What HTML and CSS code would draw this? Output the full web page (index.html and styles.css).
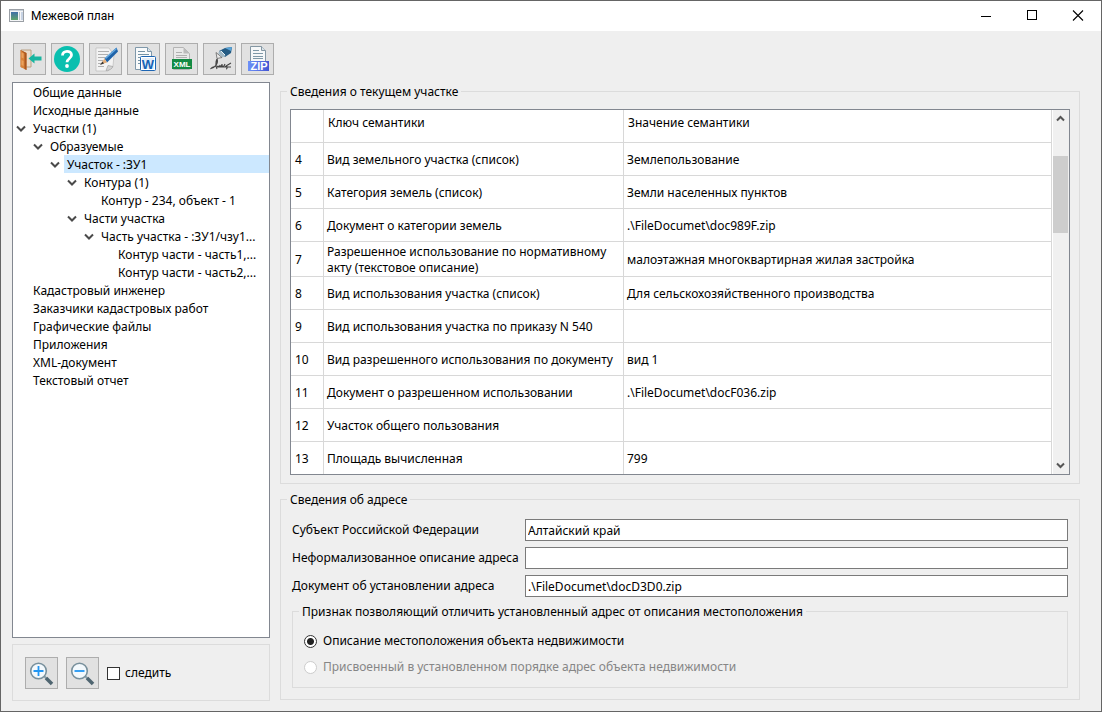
FILE: index.html
```html
<!DOCTYPE html>
<html lang="ru">
<head>
<meta charset="utf-8">
<title>Межевой план</title>
<link rel="stylesheet" href="styles.css">
</head>
<body>
<div class="window">
  <header class="titlebar">
    <svg class="app-icon" width="16" height="16" viewBox="0 0 16 16" aria-hidden="true">
      <defs><linearGradient id="app" x1="0" y1="0" x2="0" y2="1"><stop offset="0" stop-color="#3f6fa8"/><stop offset="1" stop-color="#5fa46c"/></linearGradient></defs>
      <rect x=".5" y=".5" width="14" height="12" fill="#f4f5f7" stroke="#9a9fa5"/>
      <path d="M1 1.500h13" stroke="#c9d2dc"/>
      <rect x="2" y="3" width="7" height="8" fill="url(#app)"/>
      <rect x="10" y="3" width="1" height="8" fill="#b8c4cc"/>
      <rect x="12" y="3" width="2" height="8" fill="#c7d3e4"/>
    </svg>
    <h1 class="title">Межевой план</h1>
    <button class="caption" type="button" aria-label="Свернуть"><svg width="12" height="12" viewBox="0 0 12 12"><path d="M1 6.500h10" stroke="#000"/></svg></button>
    <button class="caption" type="button" aria-label="Развернуть"><svg width="12" height="12" viewBox="0 0 12 12"><rect x="1.500" y=".5" width="9" height="9" fill="none" stroke="#000"/></svg></button>
    <button class="caption" type="button" aria-label="Закрыть"><svg width="12" height="12" viewBox="0 0 12 12"><path d="M1 .5l10 10M11 .5l-10 10" stroke="#000" stroke-width="1.100"/></svg></button>
  </header>

  <div class="client">
    <div class="toolbar" role="toolbar">
      <button class="tool" type="button" aria-label="Выход">
        <svg width="28" height="28" viewBox="0 0 28 28">
          <path d="M6 5h10v17H6z" fill="#e9dccb" stroke="#b9a084"/>
          <path d="M5.500 5l6 3v17l-6-3z" fill="#d98238"/><path d="M5.500 5l6 3v17l-2-1V8.500z" fill="#a9571f"/>
          <path d="M6.500 7.500l2 1v5l-2-1zM6.500 15l2 1v5l-2-1z" fill="#eaa15c"/>
          <path d="M13.500 13.500l6-5v3h7v4h-7v3z" fill="#18b5a0"/>
        </svg>
      </button>
      <button class="tool" type="button" aria-label="Справка">
        <svg width="28" height="28" viewBox="0 0 28 28">
          <circle cx="14" cy="14" r="13" fill="#0abfaf"/>
          <path d="M9.500 10.500c0-5.500 9-5.500 9-.4 0 3.400-4.500 3.400-4.500 7.200" fill="none" stroke="#fff" stroke-width="2.800"/>
          <circle cx="14" cy="21" r="1.900" fill="#fff"/>
        </svg>
      </button>
      <button class="tool" type="button" aria-label="Редактировать">
        <svg width="28" height="28" viewBox="0 0 28 28">
          <path d="M5 3h13l5 7-1 11-5 5H5z" fill="#f3f3f3" stroke="#bbb" stroke-width=".7"/>
          <path d="M7 6.500h11M7 9.500h10M7 12.500h7M7 15.500h5M7 18.500h3M7 21.500h6" stroke="#b0b0b0"/>
          <path d="M15 25.500l2-5 5 1c-1 2-3 4-7 4z" fill="#d4d4d4" stroke="#999" stroke-width=".6"/>
          <path d="M13.500 13.500L25.500 2.500l1.500 4-11 11z" fill="#1f63a9"/>
          <path d="M14.500 13.500L25.500 3.500" stroke="#64a8df" stroke-width="1.500"/>
          <path d="M13.500 13.500l2.500 4-6.500 2z" fill="#e3ae7a"/><path d="M11.500 16.500l1.500 2-4 1.500z" fill="#343434"/>
        </svg>
      </button>
      <button class="tool" type="button" aria-label="Отчет Word">
        <svg width="28" height="28" viewBox="0 0 28 28">
          <path d="M6.500 2.500h12l4 4v18h-16z" fill="#f8fafb" stroke="#7f98aa"/><path d="M18.500 2.500v4h4" fill="#dce5eb" stroke="#7f98aa"/>
          <path d="M9 6.500h7M9 9.500h11M9 12.500h2M9 15.500h2M9 18.500h2" stroke="#7593a6"/>
          <rect x="11.500" y="11.500" width="15" height="14" rx="1" fill="#fff" stroke="#1d65b3"/>
          <rect x="13" y="13" width="12" height="11" fill="#e2edf9"/>
          <text x="19" y="23.500" text-anchor="middle" class="word-mark">W</text>
        </svg>
      </button>
      <button class="tool" type="button" aria-label="Документ XML">
        <svg width="28" height="28" viewBox="0 0 28 28">
          <path d="M6.500 2.500h10l6 6v16h-16z" fill="#e9e9e9" stroke="#b4b4b4"/><path d="M16.500 2.500v6h6z" fill="#bcbcbc"/>
          <path d="M9 7.500h6M9 10.500h11M9 12.500h11" stroke="#b0b0b0"/>
          <rect x="5" y="14" width="20" height="10" fill="#138a43"/>
          <text x="15" y="22" text-anchor="middle" class="xml-mark">XML</text>
        </svg>
      </button>
      <button class="tool" type="button" aria-label="Подпись">
        <svg width="28" height="28" viewBox="0 0 28 28">
          <path d="M14 6l6-3 7-1-1 6-6 4z" fill="#245b83"/><path d="M20 3l7-1-1 4z" fill="#59a4d8"/>
          <path d="M13 8l3-2.500 4.500 5-3 2z" fill="#9fb8c6"/><path d="M16 6l4 4" stroke="#e9f2f6"/>
          <path d="M11 7.500l6 5-5 1z" fill="#e8e8e8" stroke="#555" stroke-width=".7"/>
          <path d="M12 14c2 5-3 9-6 9.500 2-3 8-2.500 11-2.500M12 14c-2 3-1 8 0 10M15 20c-1 4 2 1 2-1 0 4 2 3 3 0M20 22c2-3 3 2 1 2M21 21l5-3M12 22h14" fill="none" stroke="#444" stroke-width="1.100"/>
        </svg>
      </button>
      <button class="tool" type="button" aria-label="Архив ZIP">
        <svg width="28" height="28" viewBox="0 0 28 28">
          <path d="M7.500 1.500h11l4 4v19h-15z" fill="#f6f8f9" stroke="#8497a3"/><path d="M18.500 1.500v4h4" fill="#dbe3e8" stroke="#8497a3"/>
          <path d="M10 5.500h6M10 8.500h10M10 11.500h10M10 13.500h10" stroke="#7f99a8"/>
          <defs><linearGradient id="zip"><stop offset="0" stop-color="#6d91f8"/><stop offset="1" stop-color="#4355d3"/></linearGradient></defs>
          <rect x="5" y="16" width="21" height="10" fill="url(#zip)"/>
          <text x="16" y="25" text-anchor="middle" class="zip-mark">ZIP</text>
        </svg>
      </button>
    </div>

    <div class="columns">
      <aside class="side">
        <nav class="tree" aria-label="Разделы">
          <ul class="branch">
            <li><div class="node"><span class="twist"></span><span class="label">Общие данные</span></div></li>
            <li><div class="node"><span class="twist"></span><span class="label">Исходные данные</span></div></li>
            <li><div class="node"><span class="twist"><svg class="chevron" viewBox="0 0 10 7"><path d="M1 1.500l4 4 4-4"/></svg></span><span class="label">Участки (1)</span></div>
              <ul class="branch nested">
                <li><div class="node"><span class="twist"><svg class="chevron" viewBox="0 0 10 7"><path d="M1 1.500l4 4 4-4"/></svg></span><span class="label">Образуемые</span></div>
                  <ul class="branch nested">
                    <li><div class="node"><span class="twist"><svg class="chevron" viewBox="0 0 10 7"><path d="M1 1.500l4 4 4-4"/></svg></span><span class="label selected">Участок - :ЗУ1</span></div>
                      <ul class="branch nested">
                        <li><div class="node"><span class="twist"><svg class="chevron" viewBox="0 0 10 7"><path d="M1 1.500l4 4 4-4"/></svg></span><span class="label">Контура (1)</span></div>
                          <ul class="branch nested">
                            <li><div class="node"><span class="twist"></span><span class="label">Контур - 234, объект - 1</span></div></li>
                          </ul>
                        </li>
                        <li><div class="node"><span class="twist"><svg class="chevron" viewBox="0 0 10 7"><path d="M1 1.500l4 4 4-4"/></svg></span><span class="label">Части участка</span></div>
                          <ul class="branch nested">
                            <li><div class="node"><span class="twist"><svg class="chevron" viewBox="0 0 10 7"><path d="M1 1.500l4 4 4-4"/></svg></span><span class="label">Часть участка - :ЗУ1/чзу1...</span></div>
                              <ul class="branch nested">
                                <li><div class="node"><span class="twist"></span><span class="label">Контур части - часть1,...</span></div></li>
                                <li><div class="node"><span class="twist"></span><span class="label">Контур части - часть2,...</span></div></li>
                              </ul>
                            </li>
                          </ul>
                        </li>
                      </ul>
                    </li>
                  </ul>
                </li>
              </ul>
            </li>
            <li><div class="node"><span class="twist"></span><span class="label">Кадастровый инженер</span></div></li>
            <li><div class="node"><span class="twist"></span><span class="label">Заказчики кадастровых работ</span></div></li>
            <li><div class="node"><span class="twist"></span><span class="label">Графические файлы</span></div></li>
            <li><div class="node"><span class="twist"></span><span class="label">Приложения</span></div></li>
            <li><div class="node"><span class="twist"></span><span class="label">XML-документ</span></div></li>
            <li><div class="node"><span class="twist"></span><span class="label">Текстовый отчет</span></div></li>
          </ul>
        </nav>
        <div class="zoom-panel">
          <button class="tool" type="button" aria-label="Увеличить">
            <svg width="28" height="28" viewBox="0 0 28 28">
              <path d="M17 17l3 3" stroke="#8ca0aa" stroke-width="2"/><path d="M19 19l6 6" stroke="#4f6570" stroke-width="3.600"/>
              <circle cx="11.500" cy="12" r="7.800" fill="#f3f9fd" stroke="#78909c" stroke-width="1.600"/>
              <path d="M6.500 12h10M11.500 7v10" stroke="#2196f3" stroke-width="1.800"/>
            </svg>
          </button>
          <button class="tool" type="button" aria-label="Уменьшить">
            <svg width="28" height="28" viewBox="0 0 28 28">
              <path d="M17 17l3 3" stroke="#8ca0aa" stroke-width="2"/><path d="M19 19l6 6" stroke="#4f6570" stroke-width="3.600"/>
              <circle cx="11.500" cy="12" r="7.800" fill="#f3f9fd" stroke="#78909c" stroke-width="1.600"/>
              <path d="M6.500 12h10" stroke="#2196f3" stroke-width="1.800"/>
            </svg>
          </button>
          <label class="follow"><input class="check" type="checkbox">следить</label>
        </div>
      </aside>

      <main class="content">
        <fieldset class="group parcel">
          <legend>Сведения о текущем участке</legend>
          <div class="grid-box">
            <div class="grid-view">
              <table class="semantics">
                <colgroup><col class="col-num"><col class="col-key"><col></colgroup>
                <thead><tr><th></th><th scope="col">Ключ семантики</th><th scope="col">Значение семантики</th></tr></thead>
                <tbody>
                  <tr><td>4</td><td>Вид земельного участка (список)</td><td>Землепользование</td></tr>
                  <tr><td>5</td><td>Категория земель (список)</td><td>Земли населенных пунктов</td></tr>
                  <tr><td>6</td><td>Документ о категории земель</td><td>.\FileDocumet\doc989F.zip</td></tr>
                  <tr><td>7</td><td>Разрешенное использование по нормативному акту (текстовое описание)</td><td>малоэтажная многоквартирная жилая застройка</td></tr>
                  <tr><td>8</td><td>Вид использования участка (список)</td><td>Для сельскохозяйственного производства</td></tr>
                  <tr><td>9</td><td>Вид использования участка по приказу N 540</td><td></td></tr>
                  <tr><td>10</td><td>Вид разрешенного использования по документу</td><td>вид 1</td></tr>
                  <tr><td>11</td><td>Документ о разрешенном использовании</td><td>.\FileDocumet\docF036.zip</td></tr>
                  <tr><td>12</td><td>Участок общего пользования</td><td></td></tr>
                  <tr><td>13</td><td>Площадь вычисленная</td><td>799</td></tr>
                </tbody>
              </table>
            </div>
            <div class="scrollbar">
              <button class="arrow" type="button" aria-label="Вверх"><svg class="arrow-icon" viewBox="0 0 9 7"><path d="M1 5.500l3.500-3.500L8 5.500"/></svg></button>
              <div class="track"><div class="before"></div><div class="thumb"></div><div class="after"></div></div>
              <button class="arrow" type="button" aria-label="Вниз"><svg class="arrow-icon" viewBox="0 0 9 7"><path d="M1 1.500l3.500 3.500L8 1.500"/></svg></button>
            </div>
          </div>
        </fieldset>

        <fieldset class="group address">
          <legend>Сведения об адресе</legend>
          <div class="fields">
            <label for="subject">Субъект Российской Федерации</label>
            <input class="text" id="subject" type="text" value="Алтайский край">
            <label for="informal">Неформализованное описание адреса</label>
            <input class="text" id="informal" type="text">
            <label for="doc">Документ об установлении адреса</label>
            <input class="text" id="doc" type="text" value=".\FileDocumet\docD3D0.zip">
          </div>
          <fieldset class="group kind">
            <legend>Признак позволяющий отличить установленный адрес от описания местоположения</legend>
            <label class="option"><input class="radio" type="radio" name="kind" checked>Описание местоположения объекта недвижимости</label>
            <label class="option off"><input class="radio" type="radio" name="kind" disabled>Присвоенный в установленном порядке адрес объекта недвижимости</label>
          </fieldset>
        </fieldset>
      </main>
    </div>
  </div>
</div>
</body>
</html>
```
FILE: styles.css
```css
* {
  box-sizing: border-box;
}

body,
button,
input {
  font-family: "Noto Sans", "DejaVu Sans", sans-serif;
  font-size: 12px;
  line-height: 16px;
  color: #000;
}

body {
  margin: 0;
}

button {
  display: flex;
  align-items: center;
  justify-content: center;
  padding: 0;
  border: 0;
  background: none;
}

.window {
  display: flex;
  flex-direction: column;
  min-height: 100vh;
  border: 1px solid #656565;
  background: #efefef;
}

.titlebar {
  display: flex;
  align-items: center;
  height: 30px;
  padding-left: 8px;
  background: #fff;
}

.app-icon {
  margin-top: 1px;
}

.title {
  flex: 1;
  margin: 0 0 0 6px;
  font: 12px/16px Roboto, "Noto Sans", sans-serif;
}

.caption {
  width: 46px;
  height: 30px;
}

.client {
  flex: 1;
  display: flex;
  flex-direction: column;
  gap: 7px;
  padding: 12px 21px 10px 11px;
}

.toolbar {
  display: flex;
  gap: 5px;
  padding-left: 1px;
}

.tool {
  width: 33px;
  height: 32px;
  padding-right: 1px;
  border: 1px solid #adadad;
  background: #e1e1e1;
}

.word-mark,
.xml-mark,
.zip-mark {
  font-family: "Liberation Sans", sans-serif;
  font-weight: bold;
}

.word-mark {
  font-size: 13px;
  fill: #1762b5;
}

.xml-mark {
  font-size: 8px;
  fill: #fff;
}

.zip-mark {
  font-size: 11px;
  fill: #fff;
}

.columns {
  flex: 1;
  display: flex;
  gap: 10px;
}

.side {
  flex: none;
  display: flex;
  flex-direction: column;
  gap: 6px;
  width: 258px;
}

.tree {
  flex: 1;
  border: 1px solid #828790;
  background: #fff;
}

.branch {
  margin: 0;
  padding: 0;
  list-style: none;
}

.nested {
  padding-left: 17px;
}

.node {
  display: flex;
  height: 18px;
  line-height: 18px;
}

.twist {
  flex: none;
  display: flex;
  align-items: center;
  justify-content: center;
  width: 17px;
  padding-right: 2px;
}

.chevron {
  width: 10px;
  height: 7px;
  fill: none;
  stroke: #4a4a4a;
  stroke-width: 2;
}

.label {
  flex: 1;
  padding: 1px 0 0 3px;
  overflow: hidden;
  white-space: nowrap;
}

.selected {
  background: #cce8ff;
}

.zoom-panel {
  display: flex;
  align-items: center;
  gap: 8px;
  padding: 12px 12px 11px;
  border: 1px solid #dcdcdc;
}

.follow {
  display: flex;
  align-items: center;
  gap: 5px;
}

.check {
  appearance: none;
  width: 13px;
  height: 13px;
  margin: 0;
  border: 1px solid #333;
  background: #fff;
}

.content {
  flex: 1;
  display: flex;
  flex-direction: column;
  gap: 6px;
  min-width: 0;
  padding-bottom: 1px;
}

.group {
  display: flex;
  flex-direction: column;
  min-width: 0;
  margin: 0;
  border: 1px solid #dcdcdc;
}

.group > legend {
  padding: 2px 3px 0;
  line-height: 16px;
}

.parcel {
  flex: 1;
  padding: 9px 9px 8px;
}

.parcel > legend {
  margin-left: -3px;
}

.grid-box {
  flex: 1;
  display: flex;
  gap: 1px;
  height: 100%;
  border: 1px solid #828790;
  background: #fff;
}

.grid-view {
  flex: 1;
  min-width: 0;
  overflow: hidden;
}

.semantics {
  width: 100%;
  table-layout: fixed;
  border-collapse: separate;
  border-spacing: 0;
}

.col-num {
  width: 33px;
}

.col-key {
  width: 300px;
}

.semantics th,
.semantics td {
  height: 33px;
  padding: 2px 3px 0;
  border-right: 1px solid #d8d8d8;
  border-bottom: 1px solid #d8d8d8;
  text-align: left;
  vertical-align: middle;
}

.semantics th {
  padding: 0 4px 6px;
  font-weight: normal;
}

.semantics td:first-child {
  padding-left: 4px;
}

.semantics tbody tr:last-child td {
  height: 32px;
  border-bottom: 0;
}

.scrollbar {
  display: flex;
  flex-direction: column;
  width: 16px;
  background: #f0f0f0;
}

.arrow {
  height: 17px;
  padding-right: 1px;
}

.arrow-icon {
  width: 9px;
  height: 7px;
  fill: none;
  stroke: #555;
  stroke-width: 2;
}

.track {
  flex: 1;
  display: flex;
  flex-direction: column;
}

.before {
  flex: 29;
}

.thumb {
  flex: 77;
  margin-right: 1px;
  background: #cdcdcd;
}

.after {
  flex: 224;
}

.address {
  padding: 11px;
}

.address > legend {
  margin-left: -5px;
}

.fields {
  display: grid;
  grid-template-columns: 227px 1fr;
  gap: 6px;
  align-items: center;
  white-space: nowrap;
}

.text {
  width: 100%;
  height: 22px;
  padding: 0 2px;
  border: 1px solid #7a7a7a;
  background: #fff;
}

.kind {
  gap: 8px;
  margin-top: 5px;
  padding: 12px 11px 11px;
}

.kind > legend {
  margin-left: -5px;
}

.option {
  display: flex;
  align-items: center;
  gap: 6px;
  line-height: 18px;
}

.off {
  color: #868686;
}

.radio {
  appearance: none;
  width: 13px;
  height: 13px;
  margin: 0;
  border: 1px solid #333;
  border-radius: 50%;
  background: #fff;
}

.radio:checked {
  background: radial-gradient(circle, #222 0 3px, #fff 4px);
}

.radio:disabled {
  border-color: #ccc;
}
```
